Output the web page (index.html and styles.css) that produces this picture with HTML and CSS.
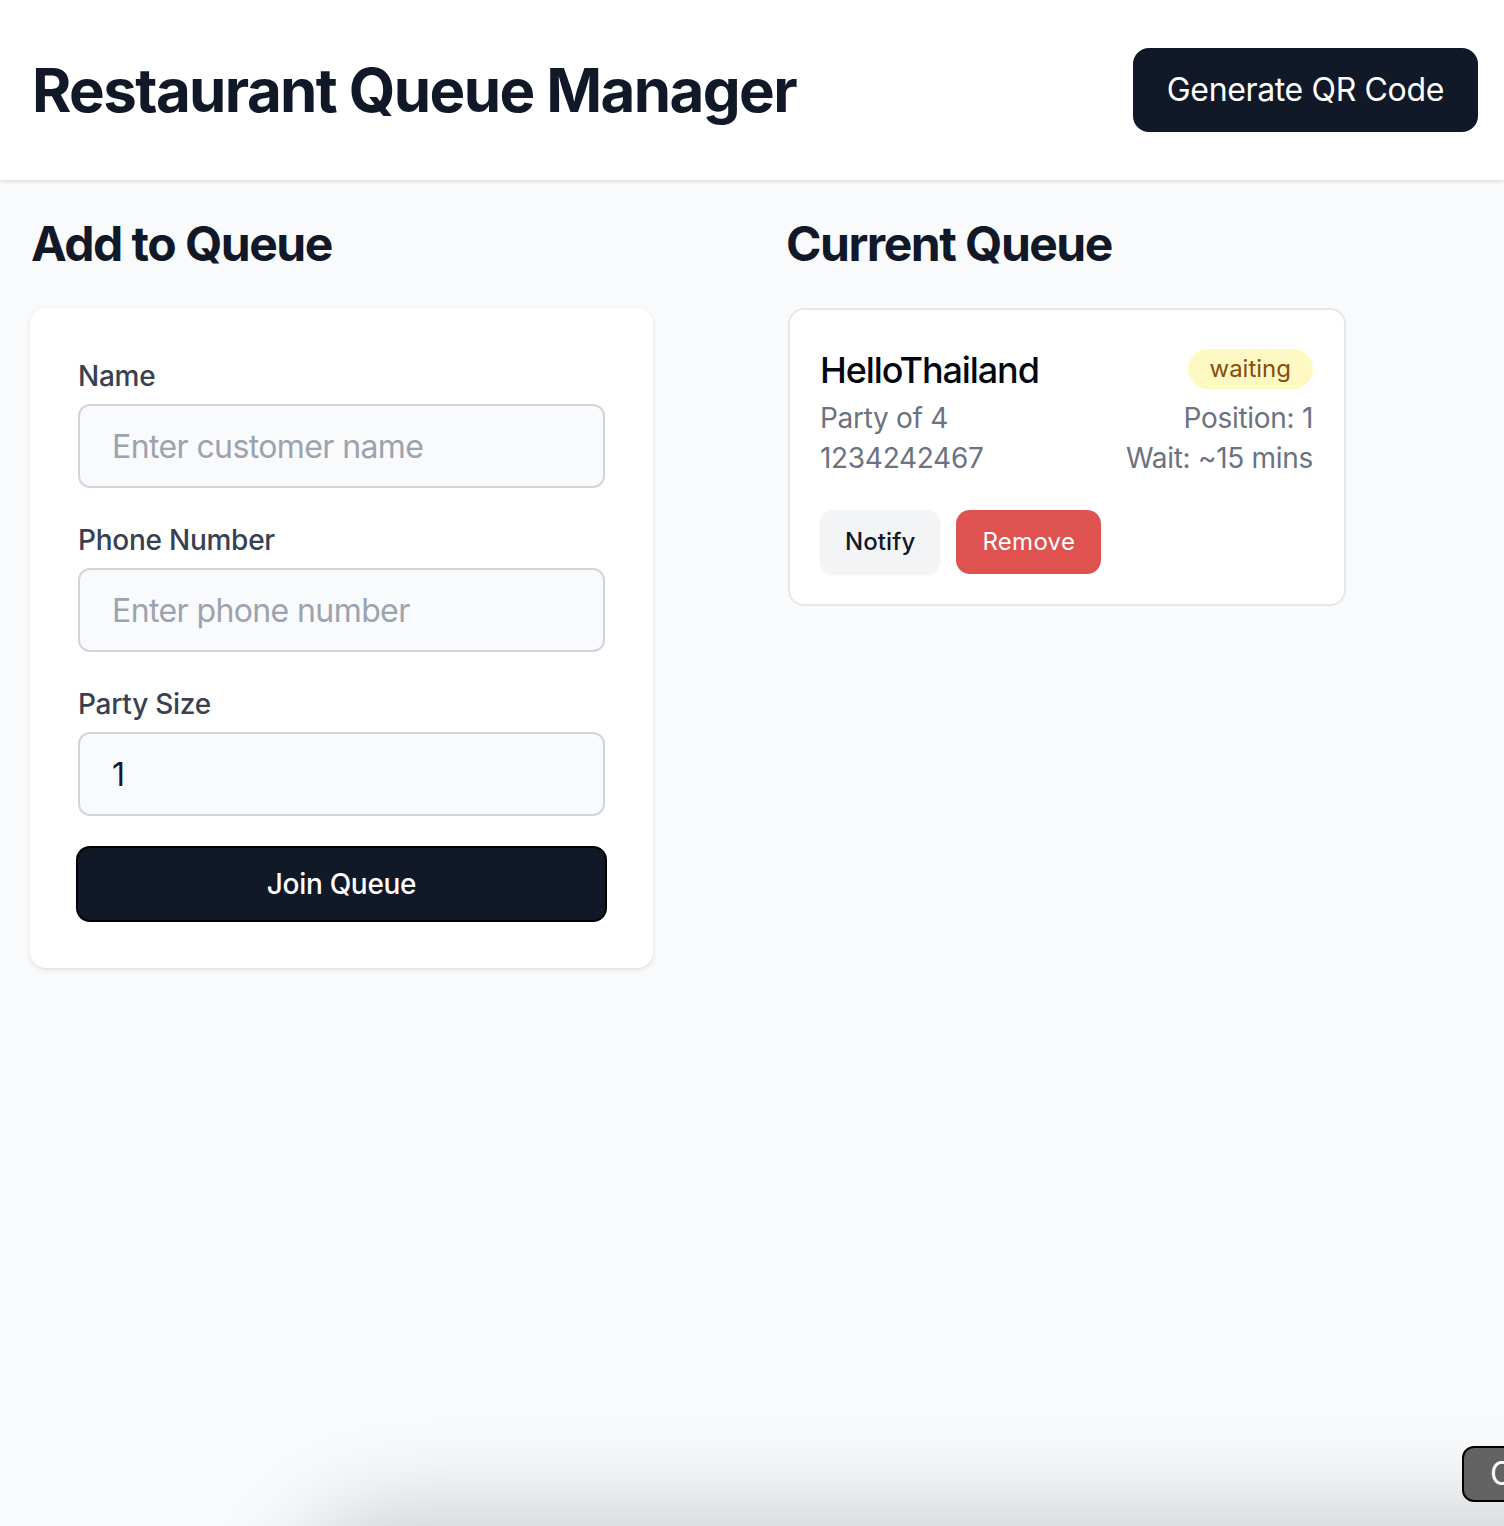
FILE: index.html
```html
<!DOCTYPE html>
<html lang="en">
<head>
<meta charset="utf-8">
<title>Restaurant Queue Manager</title>
<link rel="stylesheet" href="styles.css">
</head>
<body>
<header class="topbar">
  <h1 class="title">Restaurant Queue Manager</h1>
  <button class="btn-dark qr-btn">Generate QR Code</button>
</header>
<main class="main">
  <section class="col col-left">
    <h2 class="section-title">Add to Queue</h2>
    <form class="form-card">
      <div class="field">
        <label class="label">Name</label>
        <input class="input" type="text" placeholder="Enter customer name">
      </div>
      <div class="field">
        <label class="label">Phone Number</label>
        <input class="input" type="text" placeholder="Enter phone number">
      </div>
      <div class="field">
        <label class="label">Party Size</label>
        <input class="input" type="text" value="1">
      </div>
      <button type="button" class="btn-dark join-btn">Join Queue</button>
    </form>
  </section>
  <section class="col col-right">
    <h2 class="section-title">Current Queue</h2>
    <div class="queue-card">
      <div class="row row-head">
        <span class="guest-name">HelloThailand</span>
        <span class="badge">waiting</span>
      </div>
      <div class="row row-meta">
        <span>Party of 4</span>
        <span>Position: 1</span>
      </div>
      <div class="row row-meta">
        <span>1234242467</span>
        <span>Wait: ~15 mins</span>
      </div>
      <div class="actions">
        <button class="btn-notify">Notify</button>
        <button class="btn-remove">Remove</button>
      </div>
    </div>
  </section>
</main>
<div class="bottom-shade"></div>
<button class="corner-btn">Close</button>
</body>
</html>
```
FILE: styles.css
```css
* { box-sizing: border-box; }
html, body { margin: 0; padding: 0; }
html { height: 1526px; overflow: hidden; }
body {
  font-family: Inter, "Noto Sans", "Liberation Sans", sans-serif;
  background: #f9fafb;
  color: #111827;
  height: 1526px;
  overflow: hidden;
  position: relative;
}
button { font-family: inherit; cursor: pointer; }

.topbar {
  background: #ffffff;
  height: 180px;
  padding: 48px 26px 48px 32px;
  display: flex;
  align-items: center;
  justify-content: space-between;
  box-shadow: 0 2px 4px rgba(0,0,0,0.08), 0 1px 2px rgba(0,0,0,0.06);
  position: relative;
  z-index: 1;
}
.title {
  margin: 0;
  font-size: 60px;
  line-height: 72px;
  font-weight: 700;
  letter-spacing: -1.6px;
  color: #111827;
}
.btn-dark {
  background: #111827;
  color: #ffffff;
  border: 2px solid #111827;
}
.qr-btn {
  height: 84px;
  padding: 0 32px;
  font-size: 32px;
  line-height: 48px;
  font-weight: 400;
  letter-spacing: -0.35px;
  border-radius: 16px;
}

.main {
  display: flex;
  padding: 32px 32px;
}
.col-left { width: 756px; }
.col-right { flex: 1; }
.section-title {
  margin: 0 0 32px;
  font-size: 48px;
  line-height: 64px;
  font-weight: 700;
  color: #111827;
  letter-spacing: -1.5px;
}
.col-left .section-title { margin-left: -1px; }
.col-right .section-title { margin-left: -2px; }

.form-card {
  margin-left: -2px;
  width: 623px;
  background: #ffffff;
  border-radius: 16px;
  padding: 48px 46px 46px 48px;
  box-shadow: 0 2px 6px rgba(0,0,0,0.08), 0 1px 3px rgba(0,0,0,0.05);
  display: flex;
  flex-direction: column;
  gap: 32px;
}
.field { display: flex; flex-direction: column; gap: 8px; }
.label {
  font-size: 28px;
  line-height: 40px;
  font-weight: 500;
  letter-spacing: -0.25px;
  color: #374151;
}
.input {
  width: 527px;
  height: 84px;
  border: 2px solid #d1d5db;
  border-radius: 12px;
  background: #f9fafb;
  padding: 0 32px;
  font-family: inherit;
  font-size: 32px;
  letter-spacing: -0.6px;
  color: #111827;
  outline: none;
}
.input::placeholder { color: #9ca3af; }
.join-btn {
  margin-left: -2px;
  margin-top: -2px;
  width: 531px;
  height: 76px;
  border-radius: 14px;
  border: 2px solid #000000;
  font-size: 28px;
  font-weight: 500;
  letter-spacing: -0.3px;
  line-height: 48px;
}

.queue-card {
  margin-top: 1px;
  width: 558px;
  background: #ffffff;
  border: 2px solid #e5e7eb;
  border-radius: 16px;
  padding: 30px 31px 30px 30px;
}
.row {
  display: flex;
  justify-content: space-between;
  align-items: center;
}
.row-head { height: 58px; }
.guest-name {
  font-size: 36px;
  line-height: 56px;
  font-weight: 500;
  letter-spacing: -1.1px;
  color: #030712;
  margin-top: 2px;
}
.badge {
  background: #fef9c3;
  color: #854d0e;
  font-size: 24px;
  line-height: 32px;
  padding: 4px 22px;
  border-radius: 9999px;
}
.row-meta {
  font-size: 28px;
  line-height: 40px;
  color: #6b7280;
  letter-spacing: -0.3px;
}
.actions {
  margin-top: 32px;
  display: flex;
  gap: 16px;
}
.btn-notify, .btn-remove {
  height: 64px;
  padding: 0 26px;
  font-size: 24px;
  line-height: 32px;
  font-weight: 500;
  border: none;
  border-radius: 14px;
  letter-spacing: 0.3px;
}
.btn-notify {
  background: #f3f4f6;
  color: #111827;
  padding: 0 25px;
  letter-spacing: 0.1px;
  box-shadow: 0 1px 3px rgba(0,0,0,0.06);
}
.btn-remove {
  background: #de5350;
  color: #ffffff;
  font-weight: 400;
}

.bottom-shade {
  position: absolute;
  left: 320px;
  right: -200px;
  top: 1546px;
  height: 80px;
  border-radius: 220px 0 0 0;
  background: #d8d9db;
  box-shadow: 0 0 90px 40px rgba(0,0,0,0.17);
}
.corner-btn {
  position: absolute;
  left: 1462px;
  top: 1446px;
  width: 120px;
  height: 56px;
  background: #636363;
  color: #ffffff;
  border: 2px solid #000000;
  border-radius: 12px;
  font-size: 32px;
  text-align: left;
  padding: 0 0 0 26px;
  line-height: 50px;
}
```
